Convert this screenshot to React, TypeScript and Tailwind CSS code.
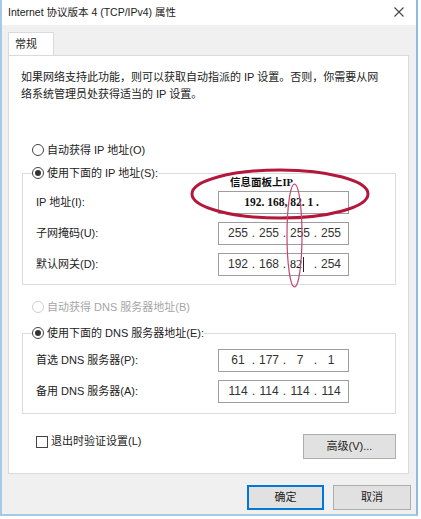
import { Fragment, type ReactNode } from 'react';

function Radio({ checked, disabled, label }: { checked?: boolean; disabled?: boolean; label: string }) {
  return (
    <span className={`flex h-[20px] items-center gap-[3px] ${disabled ? 'text-[#a6a6a6]' : 'text-[#222]'}`}>
      <span
        className={`flex h-[12px] w-[12px] items-center justify-center rounded-full border bg-white ${
          disabled ? 'border-[#cfcfcf]' : 'border-[#444]'
        }`}
      >
        {checked && <span className="h-[6px] w-[6px] rounded-full bg-[#333]" />}
      </span>
      {label}
    </span>
  );
}

function IpBox({ parts }: { parts: ReactNode[] }) {
  return (
    <div className="flex h-[23px] w-[131px] items-center border border-[#9d9d9d] bg-white pl-[9px] text-[12px] text-[#333]">
      {parts.map((p, i) => (
        <Fragment key={i}>
          {i > 0 && <span className="w-[11px] text-center">.</span>}
          <span className="w-[20px] text-center">{p}</span>
        </Fragment>
      ))}
    </div>
  );
}

function Row({ label, children }: { label: string; children: ReactNode }) {
  return (
    <div className="grid grid-cols-[182px_131px] items-center">
      <span className="text-[#222]">{label}</span>
      {children}
    </div>
  );
}

export default function App() {
  return (
    <div className="relative h-[519px] w-[421px] overflow-hidden bg-white font-['Liberation_Sans','Noto_Sans_CJK_SC',sans-serif] text-[11px] leading-[17px]">
      <div className="flex h-[516px] w-[418px] flex-col border-b-2 border-l-2 border-r-2 border-[#a7c9e8] border-r-[#8dbbe4]">
        {/* title bar */}
        <div className="flex h-[25px] items-center justify-between bg-white pl-[6px] pr-[12px]">
          <span className="text-[10.5px] text-[#222]">Internet 协议版本 4 (TCP/IPv4) 属性</span>
          <svg width="10" height="10" viewBox="0 0 10 10" className="mt-[-2px]">
            <path d="M0.5 0.5 L9.5 9.5 M9.5 0.5 L0.5 9.5" stroke="#444" strokeWidth="1.1" />
          </svg>
        </div>

        <div className="flex flex-1 flex-col bg-[#f0f0f0] pl-[6px] pt-[7px]">
          {/* tab */}
          <div className="flex h-[24px] w-[46px] items-center border border-b-0 border-[#dadada] bg-white pl-[6px] text-[#222]">
            常规
          </div>
          {/* panel */}
          <div className="mt-[-1px] flex h-[419px] w-[401px] flex-col border border-[#dadada] bg-white pl-[12px] pt-[13px]">
            <p className="text-[#222]">
              如果网络支持此功能，则可以获取自动指派的 IP 设置。否则，你需要从网
              <br />
              络系统管理员处获得适当的 IP 设置。
            </p>

            <div className="ml-[11px] mt-[37px]">
              <Radio label="自动获得 IP 地址(O)" />
            </div>

            <fieldset className="ml-[1px] mt-[3px] w-[374px] border border-[#dcdcdc] pb-[8px] pl-[9px]">
              <legend>
                <Radio checked label="使用下面的 IP 地址(S):" />
              </legend>
              <div className="mt-[8px] flex flex-col gap-[8px] pl-[4px]">
                <Row label="IP 地址(I):">
                  <div className="flex h-[23px] w-[131px] items-center justify-center border border-[#9d9d9d] bg-white pr-[4px] font-['Liberation_Serif',serif] text-[11.5px] font-semibold text-[#111]">
                    192. 168, 82. 1 .
                  </div>
                </Row>
                <Row label="子网掩码(U):">
                  <IpBox parts={['255', '255', '255', '255']} />
                </Row>
                <Row label="默认网关(D):">
                  <IpBox
                    parts={[
                      '192',
                      '168',
                      <span key="g" className="flex items-center font-['Liberation_Serif',serif] text-[12px] text-[#111]">
                        82<span className="ml-[1px] h-[15px] w-px bg-[#222]" />
                      </span>,
                      '254',
                    ]}
                  />
                </Row>
              </div>
            </fieldset>

            <div className="ml-[11px] mt-[12px]">
              <Radio disabled label="自动获得 DNS 服务器地址(B)" />
            </div>

            <fieldset className="ml-[1px] mt-[6px] w-[374px] border border-[#dcdcdc] pb-[10px] pl-[9px]">
              <legend>
                <Radio checked label="使用下面的 DNS 服务器地址(E):" />
              </legend>
              <div className="mt-[6px] flex flex-col gap-[8px] pl-[4px]">
                <Row label="首选 DNS 服务器(P):">
                  <IpBox parts={['61', '177', '7', '1']} />
                </Row>
                <Row label="备用 DNS 服务器(A):">
                  <IpBox parts={['114', '114', '114', '114']} />
                </Row>
              </div>
            </fieldset>

            <div className="mt-[19px] flex items-start justify-between pr-[12px]">
              <label className="ml-[15px] flex items-center gap-[3px] text-[#222]">
                <span className="h-[12px] w-[12px] border border-[#444] bg-white" />
                退出时验证设置(L)
              </label>
              <button className="mt-[1px] h-[25px] w-[93px] border border-[#adadad] bg-[#e1e1e1] text-[#222]">
                高级(V)...
              </button>
            </div>
          </div>

          {/* dialog buttons */}
          <div className="mt-[11px] flex justify-end gap-[9px] pr-[5px]">
            <button className="h-[25px] w-[77px] border-2 border-[#0078d7] bg-[#e1e1e1] text-[#222]">确定</button>
            <button className="h-[25px] w-[78px] border border-[#adadad] bg-[#e1e1e1] text-[#222]">取消</button>
          </div>
        </div>
      </div>

      {/* red annotations over the dialog */}
      <div className="pointer-events-none absolute left-[230px] top-[176px] font-['Liberation_Serif','Noto_Sans_CJK_SC',serif] text-[10.5px] font-bold leading-[14px] text-[#111]">
        信息面板上IP
      </div>
      <svg className="pointer-events-none absolute inset-0" width="421" height="519">
        <ellipse cx="280" cy="194" rx="88" ry="24" fill="none" stroke="#b3173b" strokeWidth="3" />
        <ellipse cx="294.5" cy="235.5" rx="7.5" ry="51.5" fill="none" stroke="#c2476f" strokeWidth="1.2" />
      </svg>
    </div>
  );
}
